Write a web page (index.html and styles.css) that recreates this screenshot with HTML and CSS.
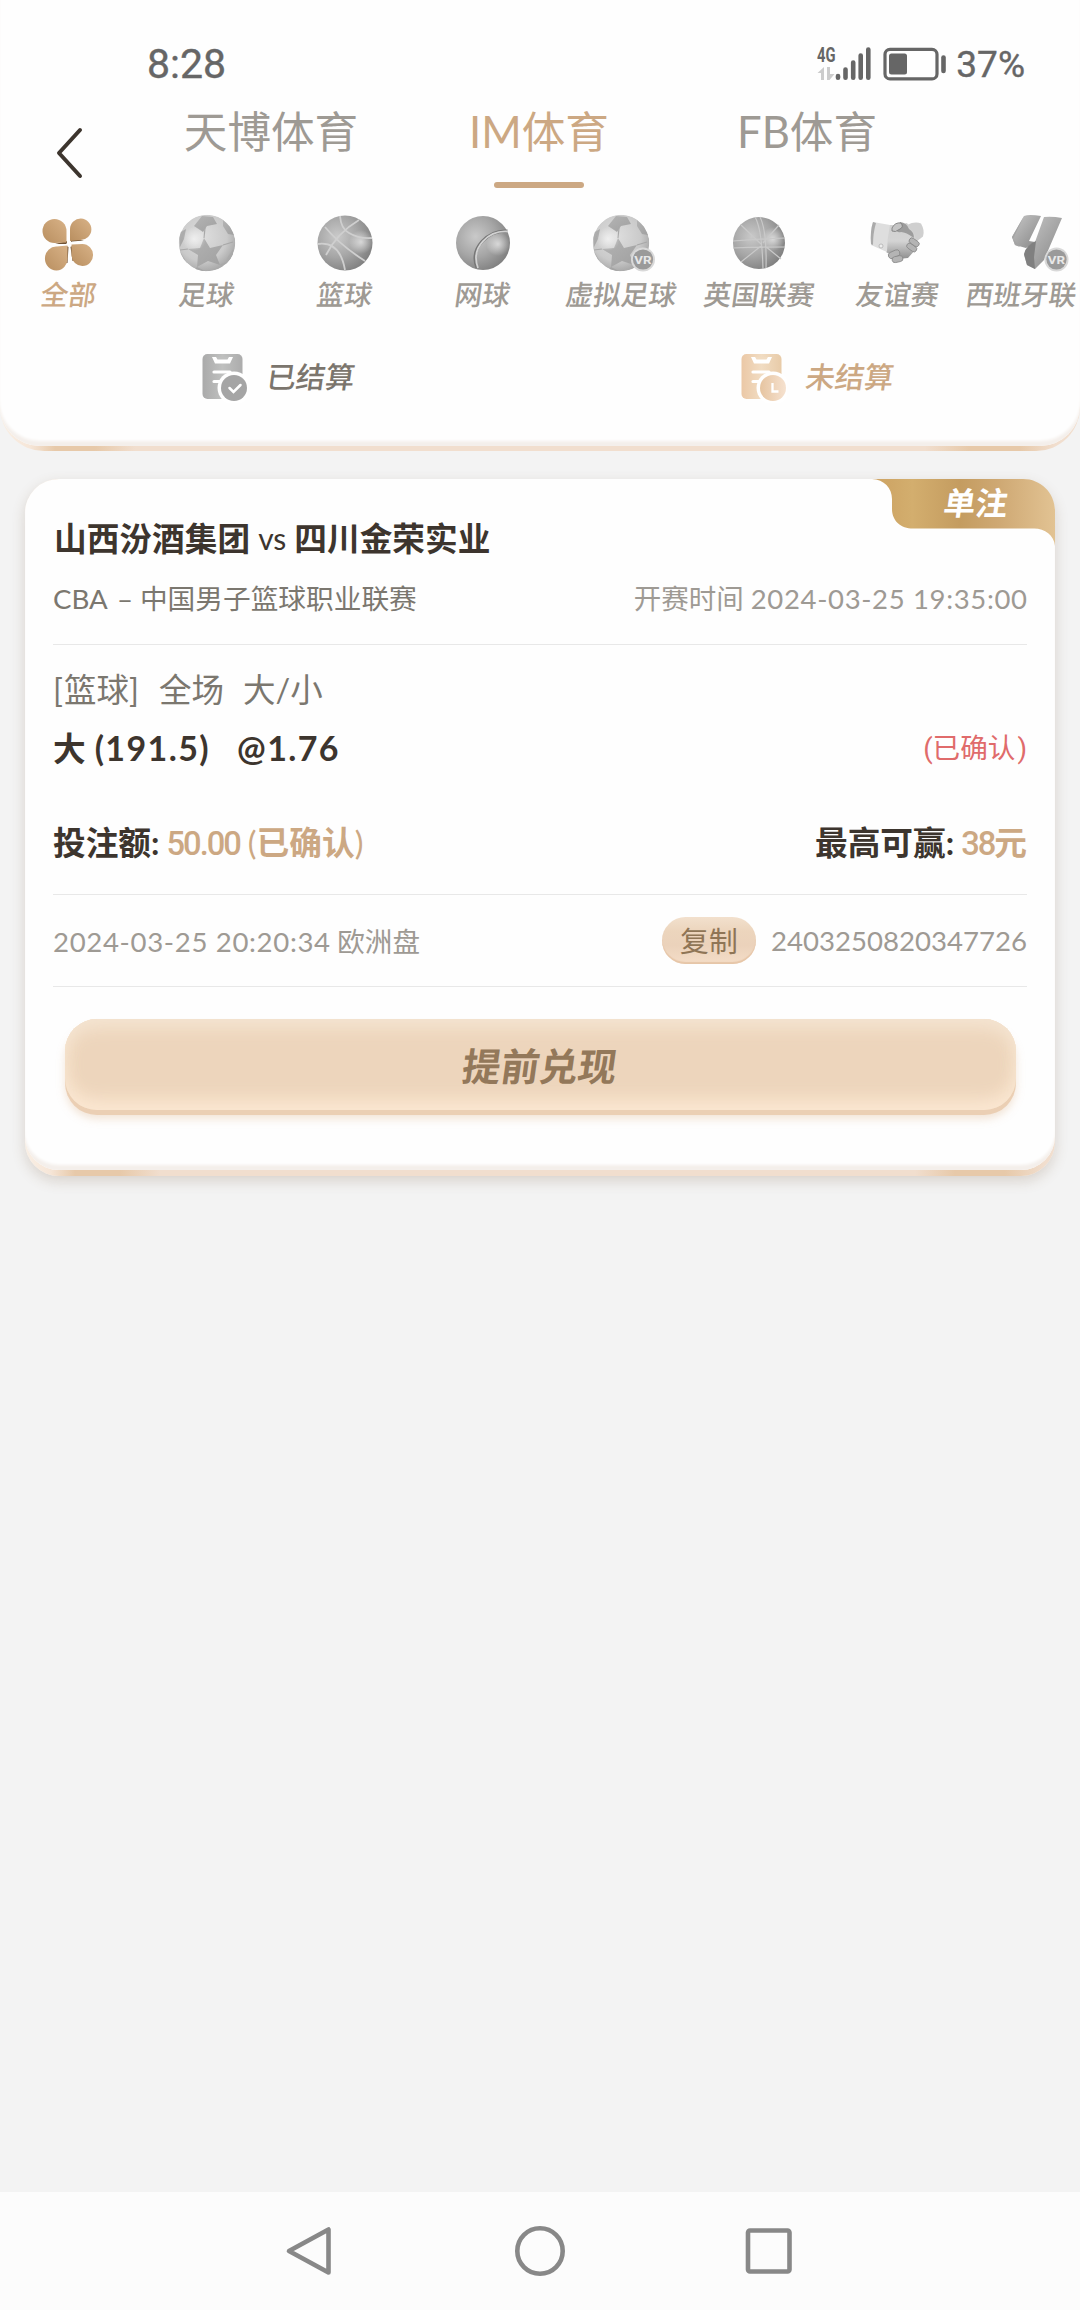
FILE: index.html
```html
<!DOCTYPE html>
<html lang="zh-CN">
<head>
<meta charset="utf-8">
<title>投注记录</title>
<link rel="stylesheet" href="styles.css">
</head>
<body>
<svg class="defs" width="0" height="0" aria-hidden="true">
  <defs>
    <radialGradient id="ball" cx="36%" cy="38%" r="68%">
      <stop offset="0" stop-color="#c9c9c9"/><stop offset=".55" stop-color="#a6a6a6"/><stop offset="1" stop-color="#808080"/>
    </radialGradient>
    <linearGradient id="patch" x1="0" y1="0" x2="1" y2="1"><stop offset="0" stop-color="#b4b4b4"/><stop offset="1" stop-color="#a0a0a0"/></linearGradient>
    <radialGradient id="shine"><stop offset="0" stop-color="#fff" stop-opacity=".6"/><stop offset="1" stop-color="#fff" stop-opacity="0"/></radialGradient>
    <radialGradient id="panel" cx="42%" cy="38%" r="62%"><stop offset="0" stop-color="#dedede"/><stop offset=".7" stop-color="#cacaca"/><stop offset="1" stop-color="#aaa"/></radialGradient>
    <linearGradient id="petal" x1="0" y1="1" x2="1" y2="0"><stop offset="0" stop-color="#b98f60"/><stop offset="1" stop-color="#d8b287"/></linearGradient>
    <linearGradient id="steel" x1="0" y1="0" x2="1" y2="1"><stop offset="0" stop-color="#c8c8c8"/><stop offset="1" stop-color="#858585"/></linearGradient>
    <linearGradient id="skin" x1="0" y1="0" x2="0" y2="1"><stop offset="0" stop-color="#d0d0d0"/><stop offset=".5" stop-color="#d4d4d4"/><stop offset="1" stop-color="#8f8f8f"/></linearGradient>
    <linearGradient id="docGray" x1="0" y1="0" x2="1" y2="0"><stop offset="0" stop-color="#aaa"/><stop offset=".5" stop-color="#bfc0bf"/><stop offset="1" stop-color="#acacac"/></linearGradient>
    <linearGradient id="docGold" x1="0" y1="0" x2="1" y2="0"><stop offset="0" stop-color="#ebc8a6"/><stop offset=".5" stop-color="#f1dcc2"/><stop offset="1" stop-color="#e8cba8"/></linearGradient>
    <linearGradient id="discGold" x1="0" y1="0" x2="1" y2="0"><stop offset="0" stop-color="#e6c4a0"/><stop offset="1" stop-color="#f6e2d0"/></linearGradient>
    <linearGradient id="ribbon" x1="0" y1="0" x2="1" y2="0">
      <stop offset="0" stop-color="#cfa465"/><stop offset=".1" stop-color="#cfa767"/><stop offset=".22" stop-color="#d3ae6e"/><stop offset=".48" stop-color="#c49c60"/><stop offset=".7" stop-color="#cfa974"/><stop offset="1" stop-color="#e2c393"/>
    </linearGradient>
    <clipPath id="disc"><circle cx="30" cy="30" r="28.3"/></clipPath>
    <symbol id="football" viewBox="0 0 60 60">
      <g clip-path="url(#disc)">
        <circle cx="30" cy="30" r="28.300" fill="url(#panel)"/>
        <g fill="url(#patch)">
          <path d="M27 25L33 35 46 32 39 42 43 52 31 48 20 54 21 42 11 36 23 35z"/>
          <path d="M17 13L25 3l11 1 4 7-10 2-4 6z"/>
          <path d="M46 7l7 7 4 8-6-1-5-8z"/>
          <path d="M2 20l7-4-2 10-4 8z"/>
          <path d="M50 45l6-9v8l-8 10z"/>
          <path d="M3 38l7 12-2 3-7-10zM20 54l10 5h-14z"/>
        </g>
        <path d="M27 25l1-10M46 32l10-3M11 36l-8 1M43 52l6-2" fill="none" stroke="#a8a8a8" stroke-width="1.200"/>
        <circle cx="17" cy="26" r="12" fill="url(#shine)"/>
      </g>
    </symbol>
    <symbol id="vr" viewBox="0 0 26 26">
      <circle cx="13" cy="13" r="12.500" fill="#d9d9d9"/><circle cx="13" cy="13" r="10.500" fill="#9a9a9a"/>
      <text x="4" y="17.500" class="vr-text" textLength="18" lengthAdjust="spacingAndGlyphs">VR</text>
    </symbol>
  </defs>
</svg>

<header class="top">
  <div class="top-inner">
    <div class="status">
      <span class="clock">8:28</span>
      <span class="status-right">
        <svg width="132" height="40" viewBox="0 0 132 40">
          <text x="1" y="20" class="net" textLength="18.500" lengthAdjust="spacingAndGlyphs">4G</text>
          <path d="M1.500 31l6.500-6v13H5v-7zM11 25h3v7h4.500l-5 6H11z" fill="#ccc"/>
          <g stroke="#666" stroke-width="4.600" stroke-linecap="round">
            <path d="M22 34v1.700M29.500 27.500v8.200M37.200 20.500v15.200M44.700 13.500v22.200M52.300 7.500v28.200"/>
          </g>
          <rect x="69" y="7.300" width="52" height="29.600" rx="5" fill="none" stroke="#666" stroke-width="3.200"/>
          <rect x="73" y="11.500" width="18" height="21" rx="2.500" fill="#666"/>
          <path d="M127.500 15.500v13.500" stroke="#666" stroke-width="4.600" stroke-linecap="round"/>
        </svg>
        <span class="percent">37%</span>
      </span>
    </div>
    <div class="tabs">
      <div class="back">
        <svg width="30" height="54" viewBox="0 0 30 54"><path d="M26 4L5 27l21 23" fill="none" stroke="#3d352e" stroke-width="4" stroke-linecap="round" stroke-linejoin="round"/></svg>
      </div>
      <div class="tab">天博体育</div>
      <div class="tab active">IM体育</div>
      <div class="tab">FB体育</div>
    </div>
    <div class="cats">
      <div class="cat active">
        <svg width="60" height="60" viewBox="0 0 60 60">
          <g fill="#6f5234"><path d="M28 30L27 31H16L28 28zM32 29l1-.5 12-1-13-2zM27.500 33l2 1-1 16h-3zM32.500 33l-1 1 2 14h3z"/></g>
          <g fill="url(#petal)">
            <path d="M27.500 29.500V18A12 12 0 1 0 15.500 30z"/>
            <path d="M31 28V16A10.700 10.700 0 1 1 41.500 27z"/>
            <path d="M28.500 32.500V44.500A11.300 12 0 1 1 18 33.500z"/>
            <path d="M32.500 31.500V42.500A10.800 11 0 1 0 43.500 31z"/>
          </g>
        </svg>
        <span>全部</span>
      </div>
      <div class="cat"><svg width="60" height="60"><use href="#football"/></svg><span>足球</span></div>
      <div class="cat">
        <svg width="60" height="60" viewBox="0 0 60 60">
          <circle cx="30" cy="30" r="27.500" fill="url(#ball)"/><circle cx="46" cy="29" r="12" fill="url(#shine)"/>
          <path d="M44 7Q22 20 11 42M10 14Q25 32 50 48M25 3q1 13 9 17 10 6 23 5M3 31q22-3 27 26" fill="none" stroke="#cfcfcf" stroke-width="1.800"/>
        </svg>
        <span>篮球</span>
      </div>
      <div class="cat">
        <svg width="60" height="60" viewBox="0 0 60 60">
          <circle cx="30" cy="30" r="27" fill="url(#ball)"/><circle cx="45" cy="31" r="12" fill="url(#shine)"/>
          <path d="M54.500 18C35 17 16 35 24 55" fill="none" stroke="#777" stroke-width="3"/>
          <path d="M55 18.500C36 17 17 34 25 55" fill="none" stroke="#d2d2d2" stroke-width="1.800"/>
        </svg>
        <span>网球</span>
      </div>
      <div class="cat"><svg width="76" height="60" viewBox="-8 0 76 60"><use href="#football" width="60" height="60"/><use href="#vr" x="39.500" y="34" width="25" height="25"/></svg><span>虚拟足球</span></div>
      <div class="cat">
        <svg width="60" height="60" viewBox="0 0 60 60">
          <circle cx="30" cy="30" r="26" fill="url(#ball)"/><circle cx="44" cy="26" r="12" fill="url(#shine)"/>
          <path d="M26 4q7 12 8 52M31 4q7 14 6 51M4 28q26-2 52-3M4 35q26-1 52-1M12 12l21 20M50 12L34 30M12 49l20-16M52 46L36 33" fill="none" stroke="#c9c9c9" stroke-width="1.200"/>
        </svg>
        <span>英国联赛</span>
      </div>
      <div class="cat">
        <svg width="60" height="60" viewBox="0 0 60 60">
          <path d="M40 12q8-4 14-1.500 4 7 2 13l-9 7z" fill="#cfcfcf"/>
          <path d="M20 12l10 0 10-2 8 12 1 14-8 9-10 1-12-7z" fill="url(#skin)"/>
          <path d="M6 9l17 3q-3 14-3 27L4 32Q3 18 6 9z" fill="#dedede"/>
          <path d="M6 9l3 1q-3 10-3 22l-2-1Q3 18 6 9z" fill="#aaa"/>
          <path d="M33 9q7 1 9 7 5 3 5 9-8-6-13-6-5 1-4-3z" fill="#9c9c9c"/>
          <path d="M25 15q3-6 9-5 3 4-1 6-5 4-8 2z" fill="#c4c4c4" stroke="#777" stroke-width=".8"/>
          <g stroke="#888" stroke-width=".8" fill="#b4b4b4"><rect x="39" y="32" width="11" height="5.500" rx="2.700" transform="rotate(35 45 35)"/><rect x="42" y="27" width="11" height="5.500" rx="2.700" transform="rotate(35 48 29)"/><rect x="21" y="38" width="12" height="6.500" rx="3.200" transform="rotate(-25 27 41)"/><rect x="25" y="43" width="11" height="6" rx="3" transform="rotate(-12 31 46)"/></g>
          <circle cx="14" cy="33" r="2" fill="#eee" stroke="#aaa" stroke-width=".7"/>
        </svg>
        <span>友谊赛</span>
      </div>
      <div class="cat">
        <svg width="76" height="60" viewBox="-8 0 76 60">
          <path d="M19 3q5-2 17 0L24 28l6 1-9 6-11-3-3-8z" fill="url(#steel)"/>
          <path d="M19 3L8 26l7 8-5-2-3-8z" fill="#a4a4a4"/>
          <path d="M39 4q8-1 18 1L39 47l-9 9-8-4-3-10q4-10 11-13z" fill="url(#steel)"/>
          <path d="M19 41q2-9 12-13l-2 16 1 12-8-4z" fill="#808080"/>
          <use href="#vr" x="39" y="34" width="25" height="25"/>
        </svg>
        <span>西班牙联</span>
      </div>
    </div>
    <div class="settle">
      <div class="settle-item">
        <svg width="46" height="50" viewBox="0 0 46 50">
          <rect x="0.500" y="1" width="40" height="45" rx="5" fill="url(#docGray)"/>
          <path d="M10 4h21l-3 6.500H13z" fill="#fff"/><path d="M14 4h13l-1.500 2.500h-10z" fill="#bfc0bf"/>
          <path d="M12 19h16M12 28.500h8" stroke="#fff" stroke-width="3.200" stroke-linecap="round"/>
          <circle cx="32" cy="35" r="16.500" fill="#fff"/><circle cx="32" cy="35" r="13" fill="#a5a5a5"/>
          <path d="M27.500 35l4 4 7-7" fill="none" stroke="#fff" stroke-width="2.500" stroke-linecap="round"/>
        </svg>
        <span>已结算</span>
      </div>
      <div class="settle-item active">
        <svg width="46" height="50" viewBox="0 0 46 50">
          <rect x="0.500" y="1" width="40" height="45" rx="5" fill="url(#docGold)"/>
          <path d="M10 4h21l-3 6.500H13z" fill="#fff"/><path d="M14 4h13l-1.500 2.500h-10z" fill="#f1dcc2"/>
          <path d="M12 19h16M12 28.500h8" stroke="#fff" stroke-width="3.200" stroke-linecap="round"/>
          <circle cx="32" cy="35" r="16.500" fill="#fff"/><circle cx="32" cy="35" r="13" fill="url(#discGold)"/>
          <path d="M31.500 30v8.500h6" fill="none" stroke="#fff" stroke-width="2.300"/>
        </svg>
        <span>未结算</span>
      </div>
    </div>
  </div>
</header>

<main class="list">
  <article class="card">
    <div class="card-inner">
      <div class="badge">
        <svg width="183" height="68" viewBox="0 0 183 68"><path d="M0 0C12 .5 20 9 20 20v10c0 12 9 19.500 21 19.500H162C173 49.500 182 56 183 67V32C183 14 169 0 151 0z" fill="url(#ribbon)"/></svg>
        <span>单注</span>
      </div>
      <div class="row teams"><b>山西汾酒集团</b><i>vs</i><b>四川金荣实业</b></div>
      <div class="row league"><span><em class="cba">CBA</em><em class="dash">–</em>中国男子篮球职业联赛</span><span class="muted">开赛时间 <em class="date">2024-03-25 19:35:00</em></span></div>
      <div class="row market"><span><u>[</u>篮球<u>]</u></span><span>全场</span><span>大/小</span></div>
      <div class="row pick"><span class="pick-text"><span>大 <em>(191.5)</em></span><em>@1.76</em></span><span class="confirm"><u>(</u>已确认<u>)</u></span></div>
      <div class="row stake">
        <span>投注额:<span class="gold"><u class="num">50.00</u> <u>(</u>已确认<u>)</u></span></span>
        <span>最高可赢:<span class="gold"><u class="num">38</u>元</span></span>
      </div>
      <div class="row order"><span><em class="date">2024-03-25 20:20:34</em> 欧洲盘</span><span class="order-id"><span class="copy">复制</span><em>2403250820347726</em></span></div>
      <div class="cash"><span>提前兑现</span></div>
    </div>
  </article>
</main>

<nav class="sysnav">
  <svg width="60" height="60" viewBox="0 0 60 60"><path d="M48.500 8.500v43L9 30z"/></svg>
  <svg width="60" height="60" viewBox="0 0 60 60"><circle cx="30" cy="30" r="22.700"/></svg>
  <svg width="60" height="60" viewBox="0 0 60 60"><rect x="9" y="9.500" width="41.500" height="41" rx="2"/></svg>
</nav>
</body>
</html>
```

FILE: styles.css
```css
* { box-sizing: border-box; }

body {
  margin: 0;
  width: 1080px;
  height: 2310px;
  display: flex;
  flex-direction: column;
  overflow: hidden;
  background: #f3f3f3;
  color: #3d352e;
  font-family: Lato, "Noto Sans CJK SC", sans-serif;
}

em, i, u { font-style: normal; text-decoration: none; }
svg { display: block; flex: none; }
.defs { position: absolute; }

/* header */
.top {
  height: 451px;
  flex: none;
  border-radius: 0 0 44px 44px;
  background: linear-gradient(90deg, #f9efe5 0, #f6e6d8 30px, #e7c9a9 55px, #e7c9a9 95px, #f1dece 135px, #f1dece 925px, #e7c9a9 970px, #e7c9a9 1020px, #f1dece 1055px);
}
.top-inner {
  height: 446px;
  border-radius: 0 0 40px 40px;
  background: #fefefe;
  box-shadow: inset 0 -6px 3px -1px #f4efeb;
}
.status {
  height: 100px;
  padding: 28px 55px 0 147px;
  display: flex;
  justify-content: space-between;
  align-items: center;
  color: #666;
  font-family: Roboto, sans-serif;
}
.clock { font-size: 41px; -webkit-text-stroke: .4px #666; }
.status-right { display: flex; align-items: center; gap: 8px; }
.status-right svg { margin-top: -4px; }
.percent { font-size: 37px; -webkit-text-stroke: .4px #666; }
.net { font: 700 21px Roboto, sans-serif; fill: #666; }
.vr-text { font: 700 12px Roboto, sans-serif; fill: #e8e8e8; }

.tabs {
  height: 104px;
  display: grid;
  grid-template-columns: 137px 268px 268px 268px;
}
.back { padding: 26px 0 0 54px; }
.tab {
  display: flex;
  flex-direction: column;
  align-items: center;
  font-size: 43.6px;
  line-height: 62px;
  color: #9e9a94;
}
.tab.active { color: #cca883; }
.tab.active::after {
  content: "";
  width: 90px;
  height: 6px;
  margin-top: 20px;
  border-radius: 3px;
  background: #cca883;
}

.cats { display: flex; padding-top: 9px; overflow: hidden; height: 126px; }
.cat {
  flex: 0 0 138px;
  display: flex;
  flex-direction: column;
  align-items: center;
  color: #9e9a94;
  font-size: 27.6px;
  line-height: 36px;
  font-weight: 500;
  white-space: nowrap;
}
.cat span { margin-top: 4px; transform: skewX(-8deg); }
.cat.active { color: #cca883; }
.cat:last-child span { align-self: flex-start; }

.settle { display: grid; grid-template-columns: 540px 540px; height: 96px; align-items: center; }
.settle-item {
  display: flex;
  align-items: center;
  gap: 19px;
  padding-left: 202px;
  font-size: 29.300px;
  line-height: 40px;
  font-weight: 500;
  color: #7b756d;
}
.settle-item:last-child { padding-left: 201px; }
.settle-item span { margin-top: -2px; transform: skewX(-8deg); }
.settle-item.active { color: #cca883; }

/* bet card */
.list { flex: 1; padding: 28px 25px 0; }
.card {
  height: 697px;
  border-radius: 34px;
  background: linear-gradient(90deg, #f9efe5 0, #f6e6d8 25px, #e7c9a9 50px, #e7c9a9 95px, #f1dece 135px, #f1dece 890px, #e7c9a9 930px, #e7c9a9 980px, #f1dece 1020px);
  box-shadow: 0 5px 14px rgba(110, 80, 50, .2);
}
.card-inner {
  position: relative;
  height: 691px;
  padding: 21px 28px 0;
  border-radius: 34px;
  background: #fefefe;
  box-shadow: inset 0 -6px 3px -1px #f4efeb;
}
.badge { position: absolute; top: 0; right: 0; }
.badge span {
  position: absolute;
  top: 0;
  left: 72px;
  color: #fff;
  font-size: 32px;
  font-weight: 700;
  line-height: 47px;
  white-space: nowrap;
  transform: skewX(-8deg);
}
.row {
  display: flex;
  justify-content: space-between;
  align-items: center;
  white-space: nowrap;
}
.teams { height: 72px; padding-left: 1px; justify-content: flex-start; font-size: 32.700px; }
.teams i { font-size: 30px; margin: 3px 8px 0 8px; }
.league { height: 73px; padding-bottom: 23px; font-size: 27.700px; color: #7b776f; border-bottom: 1px solid #e8e8e8; }
.cba { margin-right: 9px; }
.dash { display: inline-block; width: 23px; }
.date { letter-spacing: .65px; margin-right: -.65px; }
.muted { color: #9e9a94; }
.league .muted { font-size: 27.5px; }
.market { height: 62px; margin-top: 11px; justify-content: flex-start; gap: 19px; font-size: 32.500px; color: #7b776f; }
.market u { margin-right: 1px; }
.pick { height: 56px; font-size: 32.700px; font-weight: 700; }
.pick em { font-size: 34px; letter-spacing: 1.4px; }
.pick-text { display: flex; align-items: baseline; gap: 27px; word-spacing: 1px; }
.confirm { font-size: 27.600px; font-weight: 400; color: #e06b6b; }
.confirm u { font-family: Roboto, sans-serif; margin-left: 2px; }
.stake { height: 121px; padding: 12px 0 0 0; font-size: 32.700px; font-weight: 700; border-bottom: 1px solid #e8e8e8; }
.gold { margin-left: 7px; color: #cca883; }
.gold u { font-weight: 400; }
.gold .num { font-family: Roboto, sans-serif; font-weight: 500; letter-spacing: -2px; }
.order { height: 92px; font-size: 27.600px; color: #9e9a94; border-bottom: 1px solid #e8e8e8; }
.order > span:first-child { margin-top: -2px; }
.order-id { display: flex; align-items: center; gap: 15px; }
.copy {
  width: 94px;
  height: 47px;
  border-radius: 24px;
  text-align: center;
  font-size: 28.800px;
  line-height: 49px;
  color: #8f7556;
  background: linear-gradient(#f2e0cd 0, #ecd5bd 30%, #ebd2bb 60%, #f4ddc7 100%);
  box-shadow: inset 0 -2px 1px #e6c6a8;
}
.cash {
  height: 91px;
  margin: 32px 11px 0 11.500px;
  border-radius: 32px;
  display: flex;
  align-items: center;
  justify-content: center;
  font-size: 38.600px;
  font-weight: 700;
  color: #93785a;
  background: #edd5bc;
  box-shadow:
    inset 0 12px 18px -4px #f4e4d2,
    inset 0 -14px 18px -4px #fbe7d2,
    inset 0 0 20px #f4dfc3,
    0 5px 0 #ebcfb4,
    0 9px 8px rgba(220, 180, 140, .35);
}
.cash span { margin-top: -2px; transform: skewX(-8deg); }

/* system navigation */
.sysnav {
  height: 118px;
  flex: none;
  padding: 0 281px 0 280px;
  display: flex;
  justify-content: space-between;
  align-items: center;
  background: #fcfcfc;
}
.sysnav svg { fill: none; stroke: #888; stroke-width: 4.600; stroke-linejoin: round; }
```
